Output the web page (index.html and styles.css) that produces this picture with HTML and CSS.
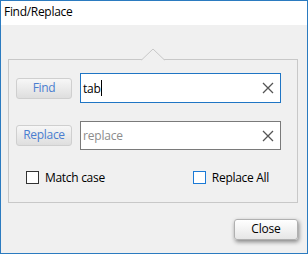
FILE: index.html
```html
<!DOCTYPE html>
<html>
<head>
<meta charset="utf-8">
<link rel="stylesheet" href="styles.css">
</head>
<body>
<div class="window">
  <div class="titlebar">Find/Replace</div>
  <div class="content">
    <div class="group">
      <svg class="notch" width="25" height="13" viewBox="0 0 25 13">
        <polyline points="0.5,12 12,1 23.5,12" fill="#f0f0f0" stroke="#c8c8c8" stroke-width="1"/>
      </svg>
      <div class="row">
        <div class="btn">Find</div>
        <div class="field focused">
          <span class="value">tab</span><span class="caret"></span>
          <svg class="clear" width="12" height="12" viewBox="0 0 12 12"><path d="M1 1L11 11M11 1L1 11" stroke="#555" stroke-width="1.3" fill="none"/></svg>
        </div>
      </div>
      <div class="row row2">
        <div class="btn">Replace</div>
        <div class="field">
          <span class="placeholder">replace</span>
          <svg class="clear" width="12" height="12" viewBox="0 0 12 12"><path d="M1 1L11 11M11 1L1 11" stroke="#555" stroke-width="1.3" fill="none"/></svg>
        </div>
      </div>
      <div class="checks">
        <label class="check"><span class="box"></span>Match case</label>
        <label class="check hover"><span class="box"></span>Replace All</label>
      </div>
    </div>
    <div class="footer">
      <div class="close">Close</div>
    </div>
  </div>
</div>
</body>
</html>
```
FILE: styles.css
```css
html, body {
  margin: 0;
  padding: 0;
  background: #f0f0f0;
}
body {
  font-family: "Open Sans", "Noto Sans", sans-serif;
  font-size: 12px;
  color: #000;
}
.window {
  width: 308px;
  height: 254px;
  box-sizing: border-box;
  border: 1px solid #2b7bc0;
  background: #f0f0f0;
  display: flex;
  flex-direction: column;
}
.titlebar {
  height: 24px;
  background: #fff;
  line-height: 22px;
  padding-left: 3px;
  font-size: 12px;
  letter-spacing: -0.3px;
}
.content {
  flex: 1;
  padding: 34px 9px 0 7px;
  display: flex;
  flex-direction: column;
}
.group {
  position: relative;
  border: 1px solid #c8c8c8;
  height: 144px;
  box-sizing: border-box;
  padding: 13px 16px 0 7px;
}
.notch {
  position: absolute;
  left: 132px;
  top: -12px;
}
.row {
  display: flex;
  align-items: center;
  gap: 8px;
  height: 30px;
}
.row2 {
  margin-top: 18px;
  height: 29px;
}
.btn {
  width: 56px;
  height: 21px;
  box-sizing: border-box;
  border: 1px solid #cfcfcf;
  border-radius: 3px;
  background: linear-gradient(#f7f7f7, #dedede);
  color: #4a7ed0;
  text-align: center;
  line-height: 18px;
  font-size: 12px;
  letter-spacing: -0.3px;
}
.field {
  flex: 1;
  height: 100%;
  box-sizing: border-box;
  border: 1px solid #7a7a7a;
  background: #fff;
  display: flex;
  align-items: center;
  padding-left: 2px;
  padding-right: 6px;
  position: relative;
  letter-spacing: -0.2px;
}
.field.focused {
  border-color: #1f75c4;
}
.value {
  color: #000;
}
.caret {
  width: 1px;
  height: 16px;
  background: #000;
}
.placeholder {
  color: #8c8c8c;
}
.clear {
  margin-left: auto;
}
.checks {
  display: flex;
  justify-content: space-between;
  margin-top: 20px;
  padding-left: 10px;
  padding-right: 12px;
  letter-spacing: -0.3px;
}
.check {
  display: flex;
  align-items: center;
  gap: 6px;
  height: 14px;
}
.box {
  width: 13px;
  height: 13px;
  box-sizing: border-box;
  border: 1px solid #333;
  background: #fff;
}
.hover .box {
  border-color: #1b7ad6;
}
.footer {
  display: flex;
  justify-content: flex-end;
  margin-top: 16px;
}
.close {
  width: 64px;
  height: 21px;
  box-sizing: border-box;
  border: 1px solid #b0b0b0;
  border-radius: 3px;
  background: linear-gradient(#ffffff, #e6e6e6);
  box-shadow: 1px 2px 4px rgba(0,0,0,0.45);
  text-align: center;
  line-height: 18px;
  font-size: 12px;
  letter-spacing: -0.2px;
}
```
